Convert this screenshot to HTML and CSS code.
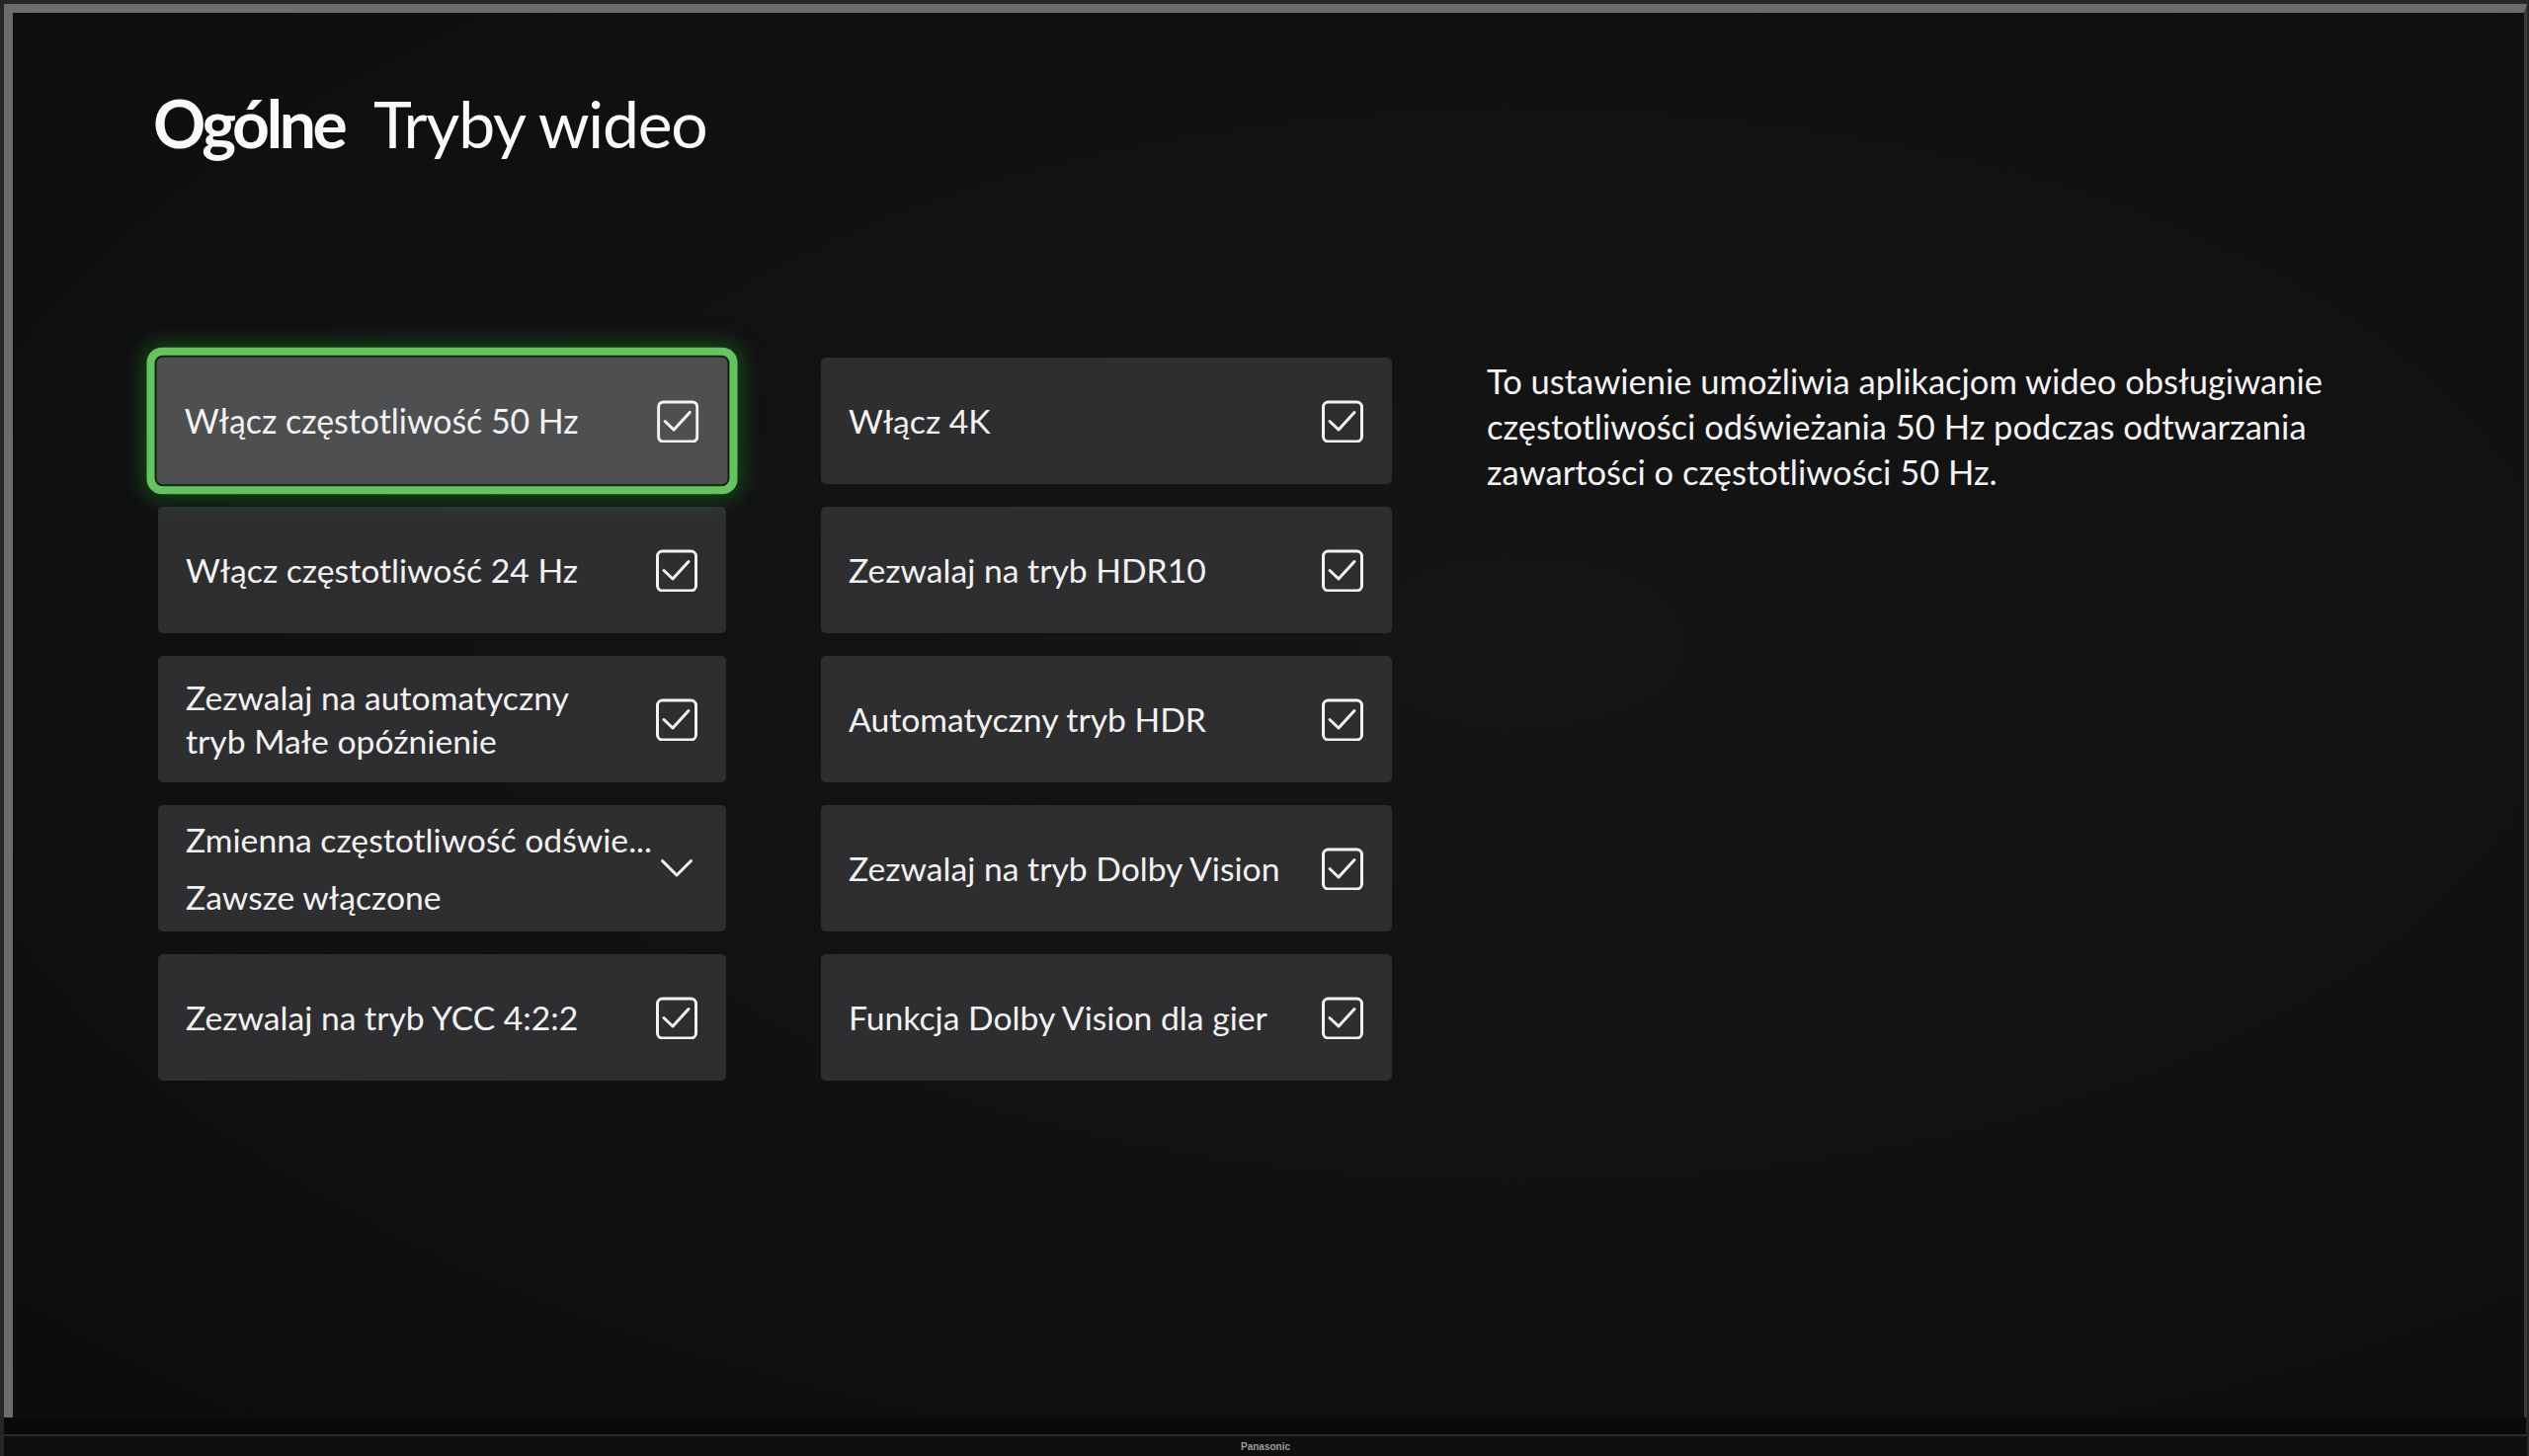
FILE: index.html
```html
<!DOCTYPE html>
<html lang="pl">
<head>
  <meta charset="UTF-8" />
  <meta name="viewport" content="width=device-width, initial-scale=1" />
  <title>Ogólne – Tryby wideo</title>
  <link rel="stylesheet" href="styles.css">
</head>
<body>
  <div class="tv">
    <div class="screen">
      <h1 class="page-title"><strong>Ogólne</strong> Tryby wideo</h1>

      <div class="settings">
        <div class="column column-left">
          <div class="card focused">
            <span class="label">Włącz częstotliwość 50 Hz</span>
            <svg class="check" viewBox="0 0 42 42"><rect x="1.5" y="1.5" width="39" height="40" rx="5"/><polyline points="8,21 17,29.5 33,12"/></svg>
          </div>
          <div class="card">
            <span class="label">Włącz częstotliwość 24 Hz</span>
            <svg class="check" viewBox="0 0 42 42"><rect x="1.5" y="1.5" width="39" height="40" rx="5"/><polyline points="8,21 17,29.5 33,12"/></svg>
          </div>
          <div class="card">
            <span class="label">Zezwalaj na automatyczny<br>tryb Małe opóźnienie</span>
            <svg class="check" viewBox="0 0 42 42"><rect x="1.5" y="1.5" width="39" height="40" rx="5"/><polyline points="8,21 17,29.5 33,12"/></svg>
          </div>
          <div class="card">
            <span class="label">
              Zmienna częstotliwość odświe...
              <span class="select-value">Zawsze włączone</span>
            </span>
            <svg class="chevron" viewBox="0 0 32 18"><polyline points="1.5,1.5 16,16 30.5,1.5"/></svg>
          </div>
          <div class="card">
            <span class="label">Zezwalaj na tryb YCC 4:2:2</span>
            <svg class="check" viewBox="0 0 42 42"><rect x="1.5" y="1.5" width="39" height="40" rx="5"/><polyline points="8,21 17,29.5 33,12"/></svg>
          </div>
        </div>

        <div class="column column-right">
          <div class="card">
            <span class="label">Włącz 4K</span>
            <svg class="check" viewBox="0 0 42 42"><rect x="1.5" y="1.5" width="39" height="40" rx="5"/><polyline points="8,21 17,29.5 33,12"/></svg>
          </div>
          <div class="card">
            <span class="label">Zezwalaj na tryb HDR10</span>
            <svg class="check" viewBox="0 0 42 42"><rect x="1.5" y="1.5" width="39" height="40" rx="5"/><polyline points="8,21 17,29.5 33,12"/></svg>
          </div>
          <div class="card">
            <span class="label">Automatyczny tryb HDR</span>
            <svg class="check" viewBox="0 0 42 42"><rect x="1.5" y="1.5" width="39" height="40" rx="5"/><polyline points="8,21 17,29.5 33,12"/></svg>
          </div>
          <div class="card">
            <span class="label">Zezwalaj na tryb Dolby Vision</span>
            <svg class="check" viewBox="0 0 42 42"><rect x="1.5" y="1.5" width="39" height="40" rx="5"/><polyline points="8,21 17,29.5 33,12"/></svg>
          </div>
          <div class="card">
            <span class="label">Funkcja Dolby Vision dla gier</span>
            <svg class="check" viewBox="0 0 42 42"><rect x="1.5" y="1.5" width="39" height="40" rx="5"/><polyline points="8,21 17,29.5 33,12"/></svg>
          </div>
        </div>

        <p class="description">
          To ustawienie umożliwia aplikacjom wideo obsługiwanie częstotliwości odświeżania 50 Hz podczas odtwarzania zawartości o częstotliwości 50 Hz.
        </p>
      </div>
    </div>
    <div class="chin"></div>
    <div class="stand"><span class="brand">Panasonic</span></div>
  </div>
</body>
</html>
```

FILE: styles.css
```css
body {
  margin: 0;
  background: #161616;
  font-family: Lato, "Open Sans", sans-serif;
  color: #f4f4f4;
}

.tv {
  width: 2560px;
  height: 1474px;
  box-sizing: border-box;
  padding: 4px 2px 0 4px;
  background: #262626;
  display: flex;
  flex-direction: column;
  overflow: hidden;
}

.screen {
  height: 1431px;
  box-sizing: border-box;
  border-top: 9px solid #6c6c6c;
  border-left: 9px solid #6c6c6c;
  border-right: 3px solid #3c3c3c;
  background: radial-gradient(ellipse at 60% 45%, #151516 0%, #111112 55%, #0d0d0d 100%);
  padding: 72px 0 0 142px;
}

.page-title {
  margin: 0;
  font-size: 66px;
  line-height: 80px;
  font-weight: 400;
  letter-spacing: -1.2px;
  color: #fafafa;
}

.page-title strong {
  font-weight: 700;
  letter-spacing: -3.4px;
  margin-right: 16px;
}

.settings {
  display: flex;
  gap: 96px;
  margin: 197px 0 0 5px;
}

.column {
  display: flex;
  flex-direction: column;
  gap: 23px;
}

.column-left {
  width: 575px;
}

.column-right {
  width: 578px;
}

.card {
  height: 128px;
  box-sizing: border-box;
  padding: 0 29px 0 28px;
  display: flex;
  align-items: center;
  justify-content: space-between;
  border-radius: 5px;
  background: #2e2e31;
}

.card.focused {
  background: #4e4f51;
  transform: scale(1.005);
  box-shadow:
    0 0 0 2px #16240f,
    0 0 0 10px #63c460,
    0 0 22px 13px rgba(30, 150, 30, 0.45);
  border-radius: 6px;
}

.label {
  font-size: 33.7px;
  line-height: 44px;
  color: #f2f2f2;
}

.select-value {
  display: block;
  margin-top: 14px;
}

.check {
  width: 42px;
  height: 43px;
  flex: none;
  fill: none;
  stroke: #f2f2f2;
  stroke-width: 3;
  stroke-linecap: round;
  stroke-linejoin: round;
}

.chevron {
  width: 32px;
  height: 18px;
  flex: none;
  margin-right: 5px;
  fill: none;
  stroke: #f2f2f2;
  stroke-width: 3;
  stroke-linecap: round;
  stroke-linejoin: round;
}

.description {
  width: 900px;
  margin: 1px 0 0;
  font-size: 34.5px;
  line-height: 46px;
  color: #f4f4f4;
}

.chin {
  height: 17px;
  background: #0a0a0a;
  margin-right: 1px;
}

.stand {
  flex: 1;
  border-top: 2px solid #2c2c2c;
  background: #0f0f0f;
  display: flex;
  justify-content: center;
  align-items: center;
}

.brand {
  font-family: "Liberation Sans", Arial, sans-serif;
  font-size: 10px;
  font-weight: 700;
  color: #9c9c9c;
}
```
